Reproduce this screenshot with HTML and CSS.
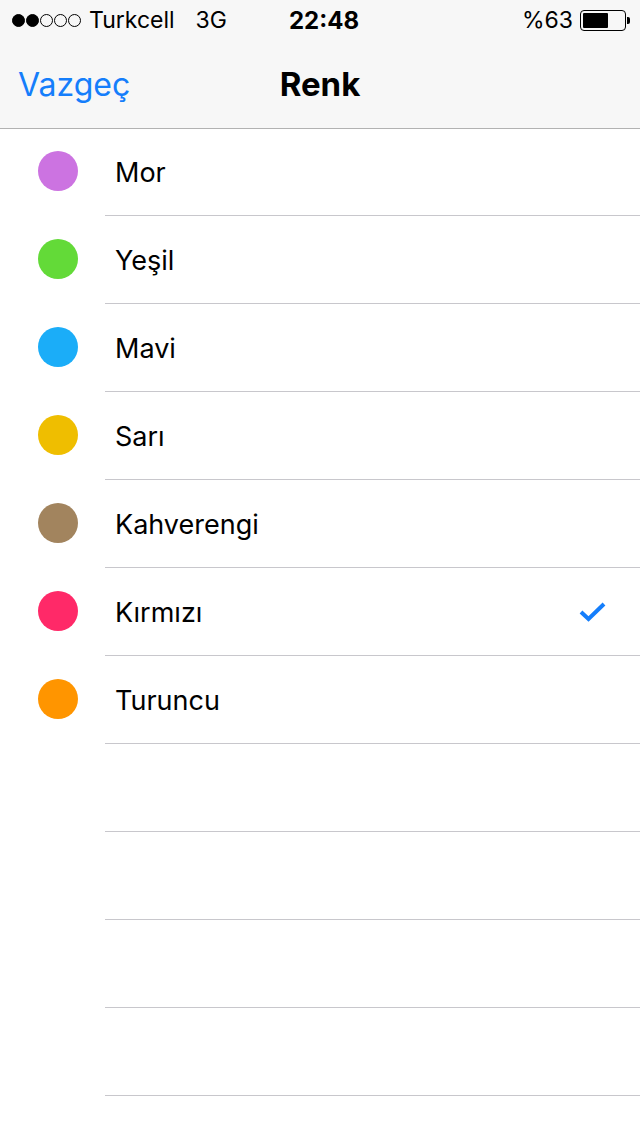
FILE: index.html
```html
<!DOCTYPE html>
<html lang="tr">
<head>
<meta charset="utf-8">
<link rel="stylesheet" href="styles.css">
</head>
<body>
<header class="top">
  <div class="status">
    <div class="status-left">
      <span class="dots"><i class="on"></i><i class="on"></i><i></i><i></i><i></i></span>
      <span class="carrier">Turkcell</span>
      <span class="net">3G</span>
    </div>
    <div class="time">22:48</div>
    <div class="status-right">
      <span class="pct">%63</span>
      <span class="battery"><span class="cell"><span class="level"></span></span><span class="tip"></span></span>
    </div>
  </div>
  <nav class="nav">
    <span class="cancel">Vazgeç</span>
    <span class="title">Renk</span>
    <span class="spacer"></span>
  </nav>
</header>
<ul class="list">
  <li class="row"><span class="dot mor"></span><span class="label">Mor</span></li>
  <li class="row"><span class="dot yesil"></span><span class="label">Yeşil</span></li>
  <li class="row"><span class="dot mavi"></span><span class="label">Mavi</span></li>
  <li class="row"><span class="dot sari"></span><span class="label">Sarı</span></li>
  <li class="row"><span class="dot kahve"></span><span class="label">Kahverengi</span></li>
  <li class="row"><span class="dot kirmizi"></span><span class="label">Kırmızı</span>
    <svg class="check" width="28" height="22" viewBox="0 0 28 22"><path d="M2 11 L9.5 18 L25 3" fill="none" stroke="#157efb" stroke-width="4"/></svg>
  </li>
  <li class="row"><span class="dot turuncu"></span><span class="label">Turuncu</span></li>
  <li class="row empty"></li>
  <li class="row empty"></li>
  <li class="row empty"></li>
  <li class="row empty"></li>
</ul>
</body>
</html>
```
FILE: styles.css
```css
* { box-sizing: border-box; }
html, body { margin: 0; padding: 0; background: #fff; }
body { width: 640px; height: 1136px; overflow: hidden; font-family: Inter, "Noto Sans", sans-serif; color: #000; }

.top { background: #f7f7f7; border-bottom: 1px solid #b2b2b2; height: 129px; }
.status { height: 40px; display: flex; align-items: center; justify-content: space-between; padding: 0 10px 0 12px; font-size: 23px; }
.status-left { display: flex; align-items: center; width: 220px; }
.dots { display: flex; gap: 1px; margin-right: 8px; }
.dots i { width: 13px; height: 13px; border-radius: 50%; border: 1.5px solid #000; display: block; }
.dots i.on { background: #000; }
.carrier { margin-right: 21px; }
.time { font-weight: 700; font-size: 24px; flex: 1; text-align: center; padding-left: 6px; }
.status-right { display: flex; align-items: center; width: 220px; justify-content: flex-end; }
.pct { margin-right: 7px; }
.battery { display: flex; align-items: center; }
.cell { width: 46px; height: 21px; border: 1.5px solid #000; border-radius: 4px; padding: 2px; display: block; }
.level { display: block; height: 100%; width: 63%; background: #000; border-radius: 1px; }
.tip { width: 3px; height: 7px; background: #000; border-radius: 0 2px 2px 0; margin-left: 1px; }

.nav { height: 88px; display: flex; align-items: center; justify-content: space-between; padding: 0 18px; }
.cancel { color: #157efb; font-size: 32px; width: 200px; }
.title { font-weight: 700; font-size: 33px; }
.spacer { width: 200px; }

.list { list-style: none; margin: 0; padding: 0; }
.row { height: 88px; display: flex; align-items: center; position: relative; }
.row::after { content: ""; position: absolute; left: 105px; right: 0; bottom: 0; height: 1px; background: #c8c7cc; }
.row:first-child { height: 87px; }
.dot { width: 40px; height: 40px; border-radius: 50%; margin: 0 37px 3px 38px; flex: none; }
.label { font-size: 27px; flex: 1; }
.check { margin-right: 33px; }
.mor { background: #cc73e1; }
.yesil { background: #63da38; }
.mavi { background: #1badf8; }
.sari { background: #efbe00; }
.kahve { background: #a2845e; }
.kirmizi { background: #ff2968; }
.turuncu { background: #ff9500; }
```
